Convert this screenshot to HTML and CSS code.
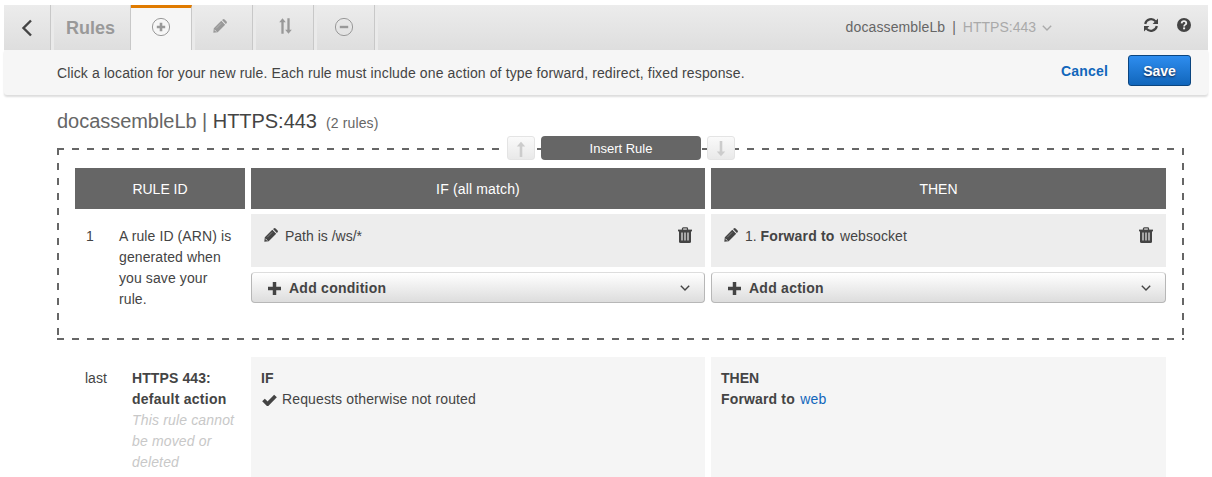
FILE: index.html
```html
<!DOCTYPE html>
<html lang="en">
<head>
<meta charset="utf-8">
<title>Rules</title>
<link rel="stylesheet" href="styles.css">
</head>
<body>
<svg class="defs" width="0" height="0">
  <symbol id="pencil" viewBox="0 0 14 14"><path d="M.3 13.700 .8 9.300 8.300 1.800 12.200 5.700 4.700 13.200zM9 1.100 9.800.400q.9-.7 1.800 0l2 2q.7.9 0 1.800l-.8.8z" fill="currentColor"/><path d="M1.400 10.700 3.300 12.600" stroke="#ddd" stroke-width="1"/><path d="M3.200 9.300 8.200 4.300" stroke="#ddd" stroke-width=".4"/></symbol>
  <symbol id="trash" viewBox="0 0 14 16"><path d="M4.500 3V1.700Q4.500.900 5.300.900H8.700Q9.500.900 9.500 1.700V3" fill="none" stroke="currentColor" stroke-width="1.300"/><path d="M0 3.500H14" stroke="currentColor" stroke-width="1.800"/><path d="M1 3H13V14.500Q13 16 11.500 16H2.500Q1 16 1 14.500z" fill="currentColor"/><path d="M4 5.500V13.500M7 5.500V13.500M10 5.500V13.500" fill="none" stroke="#ddd" stroke-width="1.300"/></symbol>
  <symbol id="plus" viewBox="0 0 12 12"><path d="M6 0V12M0 6H12" stroke="currentColor" stroke-width="3.200"/></symbol>
  <symbol id="chevron" viewBox="0 0 10 6"><path d="M.8.800 5 5 9.200.800" fill="none" stroke="currentColor" stroke-width="1.400"/></symbol>
</svg>
<header class="toolbar">
  <nav class="tabs">
    <div class="tab back"><svg width="12" height="18" viewBox="0 0 12 18"><path d="M10 1.500 2.500 9 10 16.500" fill="none" stroke="#444" stroke-width="2.400"/></svg></div>
    <div class="tab title">Rules</div>
    <div class="tab active"><svg width="20" height="20" viewBox="0 0 20 20"><circle cx="10" cy="10" r="8.600" fill="none" stroke="#999"/><path d="M10 5.800V14.200M5.800 10H14.200" stroke="#999" stroke-width="2.600"/></svg></div>
    <div class="tab edit"><svg width="14" height="14"><use href="#pencil"/></svg></div>
    <div class="tab sort"><svg width="13" height="16" viewBox="0 0 13 16"><path d="M3.500 15.800V3M9.500.200V13" stroke="#999" stroke-width="2.300" fill="none"/><path d="M.2 4.200 3.500.200 6.800 4.200zM6.200 11.800 9.500 15.800 12.800 11.800z" fill="#999"/></svg></div>
    <div class="tab remove"><svg width="20" height="20" viewBox="0 0 20 20"><circle cx="10" cy="10" r="8.600" fill="none" stroke="#999"/><path d="M5.800 10H14.200" stroke="#999" stroke-width="2.400"/></svg></div>
    <div class="tab-end"></div>
  </nav>
  <div class="listener"><span class="name">docassembleLb</span><span>|</span><span class="port">HTTPS:443</span><svg width="10" height="6"><use href="#chevron"/></svg></div>
  <div class="tools">
    <svg width="14" height="14" viewBox="0 0 14 14"><path d="M1.200 6A5.900 5.900 0 0 1 11.600 3.400M12.800 8A5.900 5.900 0 0 1 2.400 10.600" fill="none" stroke="#444" stroke-width="2.200"/><path d="M14 .500V5.900H8.600zM0 13.500V8.100H5.400z" fill="#444"/></svg>
    <svg width="14" height="14" viewBox="0 0 14 14"><circle cx="7" cy="7" r="7" fill="#444"/><path d="M4.600 5.300Q4.900 3.200 7 3.200T9.300 5.200C9.300 6.700 7.100 6.600 7.100 8.400" fill="none" stroke="#eee" stroke-width="1.800"/><path d="M6.100 9.400H8.100V11.300H6.100z" fill="#eee"/></svg>
  </div>
</header>
<section class="prompt">
  <p>Click a location for your new rule. Each rule must include one action of type forward, redirect, fixed response.</p>
  <a class="cancel">Cancel</a>
  <button class="save">Save</button>
</section>
<main>
  <h1>docassembleLb | <span class="dark">HTTPS:443</span><small>(2 rules)</small></h1>
  <section class="draft">
    <div class="insert">
      <button class="move"><svg width="10" height="16" viewBox="0 0 10 16"><path d="M5 16V3" stroke="#ccc" stroke-width="2.600"/><path d="M.8 5.500 5 .800 9.200 5.500z" fill="#ccc"/></svg></button>
      <button class="insert-rule">Insert Rule</button>
      <button class="move"><svg width="10" height="16" viewBox="0 0 10 16"><path d="M5 0V13" stroke="#ccc" stroke-width="2.600"/><path d="M.8 10.500 5 15.200 9.200 10.500z" fill="#ccc"/></svg></button>
    </div>
    <div class="grid heads"><div>RULE ID</div><div class="if">IF (all match)</div><div>THEN</div></div>
    <div class="grid">
      <div class="rule-id"><span class="num">1</span><p>A rule ID (ARN) is generated when you save your rule.</p></div>
      <div class="col">
        <div class="item"><svg class="pen" width="14" height="14"><use href="#pencil"/></svg><span>Path is /ws/*</span><svg class="trash" width="14" height="16"><use href="#trash"/></svg></div>
        <button class="add"><svg width="13" height="13"><use href="#plus"/></svg><span>Add condition</span><svg class="arrow" width="10" height="6"><use href="#chevron"/></svg></button>
      </div>
      <div class="col">
        <div class="item"><svg class="pen" width="14" height="14"><use href="#pencil"/></svg><span>1. <b>Forward to</b><span class="target">websocket</span></span><svg class="trash" width="14" height="16"><use href="#trash"/></svg></div>
        <button class="add"><svg width="13" height="13"><use href="#plus"/></svg><span>Add action</span><svg class="arrow" width="10" height="6"><use href="#chevron"/></svg></button>
      </div>
    </div>
  </section>
  <section class="grid default">
    <div class="rule-id last"><span class="num">last</span><p><b>HTTPS 443: <span class="wide">default action</span></b><br><i>This rule cannot be moved or deleted</i></p></div>
    <div class="cell"><b>IF</b><div class="otherwise"><svg width="15" height="12" viewBox="0 0 15 12"><path d="M1.500 6 5.600 10 13.500 2" fill="none" stroke="#444" stroke-width="3.800"/></svg><span>Requests otherwise not routed</span></div></div>
    <div class="cell"><b>THEN</b><div><b class="forward">Forward to</b><a class="target">web</a></div></div>
  </section>
</main>
</body>
</html>
```
FILE: styles.css
```css
* { box-sizing: border-box; }
html { overflow: hidden; }
body { margin: 0; padding: 5px 4px 0; height: 477px; overflow: hidden; background: #fff; color: #444; font: 14px/21px "Liberation Sans", Arial, sans-serif; }
p, h1 { margin: 0; }
svg { display: block; flex: none; }
button { font: inherit; padding: 0; }
.defs { position: absolute; }
.toolbar { display: flex; height: 45px; background: linear-gradient(#ececec, #dedede); }
.tabs { display: flex; color: #999; }
.tab { width: 61px; border-right: 1px solid #c8c8c8; border-left: 3px solid #eaeaea; display: flex; justify-content: center; padding-top: 12px; }
.back { width: 47px; border-left: 0; padding-top: 14px; }
.title { width: 80px; font-size: 18px; font-weight: bold; padding: 13px 3px 0 0; }
.active { background: #f6f6f6; border-left: 0; border-top: 3px solid #e07b00; padding-top: 9px; }
.edit { padding: 14px 8px 0 0; }
.sort { padding: 13px 0 0 2px; }
.remove { padding-right: 4px; }
.tab-end { width: 3px; background: #eaeaea; }
.listener { margin-left: auto; display: flex; gap: 7px; padding-top: 12px; color: #666; }
.listener .name { letter-spacing: .12px; }
.listener .port { color: #aaa; }
.listener svg { margin: 8px 1px 0 -1px; color: #aaa; }
.tools { display: flex; gap: 19px; padding: 13px 17px 0 91px; }
.prompt { display: flex; height: 45px; padding: 0 17px 0 53px; background: #f6f6f6; box-shadow: 0 2px 2px #ddd; border-radius: 0 0 3px 3px; }
.prompt p { padding-top: 13px; letter-spacing: .123px; }
.cancel { margin-left: auto; padding-top: 11px; color: #1166bb; font-weight: bold; letter-spacing: .2px; }
.save { width: 63px; height: 31px; margin: 5px 0 0 20px; padding-top: 1px; border: 1px solid #0b457f; border-radius: 3px; background: linear-gradient(#2e8def, #1166bb); color: #fff; font-weight: bold; text-shadow: 0 1px 2px #124; }
main { padding: 0 24px 0 53px; }
h1 { height: 53px; padding-top: 13px; font-size: 20px; line-height: 26px; font-weight: normal; color: #666; letter-spacing: -.04px; }
.dark { color: #444; }
small { margin-left: 9px; font-size: 14px; letter-spacing: .15px; }
.draft {
  position: relative; height: 192px; padding: 20px 18px 0;
  background:
    repeating-linear-gradient(90deg, #666 0 7.5px, transparent 7.5px 15px) top / 100% 2px no-repeat,
    repeating-linear-gradient(90deg, #666 0 7.5px, transparent 7.5px 15px) bottom / 100% 2px no-repeat,
    repeating-linear-gradient(#666 0 7.5px, transparent 7.5px 15px) left / 2px 100% no-repeat,
    repeating-linear-gradient(#666 0 7.5px, transparent 7.5px 15px) right / 2px 100% no-repeat;
}
.insert { position: absolute; top: -12px; left: 450px; display: flex; gap: 6px; }
.insert-rule { width: 160px; height: 24px; border: 0; border-radius: 4px; background: #666; color: #fff; font-size: 13px; }
.move { width: 28px; height: 24px; display: flex; justify-content: center; align-items: center; padding-top: 2px; border: 1px solid #e4e4e4; border-radius: 3px; background: linear-gradient(#fafafa, #e9e9e9); }
.grid { display: grid; grid-template-columns: 170px 454px 455px; column-gap: 6px; }
.heads { margin-bottom: 5px; }
.heads div { height: 41px; background: #666; color: #fff; text-align: center; line-height: 42px; }
.heads .if { letter-spacing: .15px; }
.rule-id { display: flex; padding: 12px 0 0 11px; }
.num { width: 33px; }
.rule-id p { width: 120px; letter-spacing: .1px; }
.last { padding: 11px 0 0 10px; }
.last .num { width: 47px; }
.last p { width: 112px; }
.wide { letter-spacing: .25px; }
i { color: #c8c8c8; letter-spacing: .16px; }
.col { display: flex; flex-direction: column; gap: 5px; }
.item { display: flex; height: 53px; padding: 12px 13px 0; background: #ededed; }
.item b, .forward { letter-spacing: .15px; }
.pen { margin: 2px 7px 0 0; }
.trash { margin: 1px 0 0 auto; }
.add { display: flex; align-items: center; height: 31px; padding: 1px 14px 0 16px; border: 1px solid #b7b7b7; border-top-color: #ddd; border-radius: 4px; background: linear-gradient(#fff, #ddd); color: #444; font-weight: bold; }
.add span { margin: 1px 0 0 8px; letter-spacing: .25px; }
.arrow { margin-left: auto; }
.target { margin-left: 5.500px; letter-spacing: .1px; }
.default { margin-top: 17px; padding-left: 18px; }
.cell { height: 120px; padding: 11px 10px 0; background: #f5f5f5; }
.otherwise { display: flex; letter-spacing: .14px; }
.otherwise svg { margin: 5px 5px 0 1px; }
a.target { color: #1166bb; }
```
